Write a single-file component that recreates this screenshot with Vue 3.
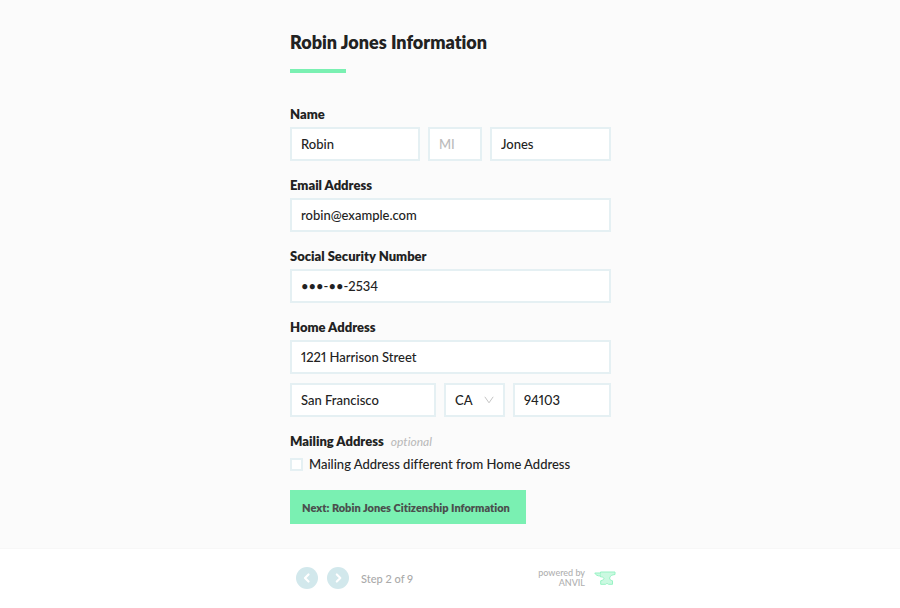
<script setup>
import { ref } from 'vue'

const first = ref('Robin')
const middle = ref('')
const last = ref('Jones')
const email = ref('robin@example.com')
const ssn = ref('•••-••-2534')
const street = ref('1221 Harrison Street')
const city = ref('San Francisco')
const state = ref('CA')
const zip = ref('94103')
const different = ref(false)
</script>

<template>
  <div class="page">
    <main class="content">
      <form class="form" @submit.prevent>
        <h1 class="title">Robin Jones Information</h1>
        <div class="field">
          <label class="label" for="first">Name</label>
          <div class="row name-row">
            <input id="first" v-model="first" class="input" type="text" />
            <input v-model="middle" class="input" type="text" placeholder="MI" aria-label="Middle initial" />
            <input v-model="last" class="input" type="text" aria-label="Last name" />
          </div>
        </div>
        <div class="field">
          <label class="label" for="email">Email Address</label>
          <input id="email" v-model="email" class="input" type="email" />
        </div>
        <div class="field">
          <label class="label" for="ssn">Social Security Number</label>
          <input id="ssn" v-model="ssn" class="input" type="text" />
        </div>
        <div class="field">
          <label class="label" for="street">Home Address</label>
          <input id="street" v-model="street" class="input" type="text" />
          <div class="row city-row">
            <input v-model="city" class="input" type="text" aria-label="City" />
            <div class="select-wrap">
              <select v-model="state" class="input select" aria-label="State">
                <option>CA</option>
              </select>
              <svg class="caret" viewBox="0 0 10 8" aria-hidden="true"><path d="M0.8 0.8 5 6.8 9.2 0.8" /></svg>
            </div>
            <input v-model="zip" class="input" type="text" aria-label="Zip code" />
          </div>
        </div>
        <div class="mailing">
          <div class="label">Mailing Address <em class="optional">optional</em></div>
          <label class="check">
            <input v-model="different" class="box" type="checkbox" />
            <span>Mailing Address different from Home Address</span>
          </label>
        </div>
        <button class="next" type="submit">Next: Robin Jones Citizenship Information</button>
      </form>
    </main>
    <footer class="footer">
      <div class="footer-inner">
        <button class="round" type="button" aria-label="Previous step">
          <svg viewBox="0 0 22 22"><path d="M12.5 7.500 9 11l3.500 3.500" /></svg>
        </button>
        <button class="round" type="button" aria-label="Next step">
          <svg viewBox="0 0 22 22"><path d="M9.800 7.500l3.500 3.500-3.500 3.500" /></svg>
        </button>
        <span class="step">Step 2 of 9</span>
        <a class="powered" href="#">
          <span class="powered-text"><span>powered by</span><span>ANVIL</span></span>
          <svg class="anvil" viewBox="0 0 22 14" aria-hidden="true">
            <path d="M6.500 1H21v2.500c-3 .2-5 1.500-5.400 3.500 0 1.500.9 2.300 2.900 2.800V13.300h-4.100c-.5-1-2.200-1-2.700 0H6.700V9.800c2.200-.5 3.300-1.300 3.300-2.600-.6-.9-1.700-1.400-3.500-1.400Z" />
            <path d="M6.500 2H.8c.8 2 2.700 3 5.700 3" />
          </svg>
        </a>
      </div>
    </footer>
  </div>
</template>

<style>
body {
  background: #fff;
}
</style>

<style scoped>
.page {
  font-family: Lato, "Open Sans", sans-serif;
  font-size: 13px;
  font-weight: 500;
  font-variant-ligatures: none;
  font-variant-numeric: proportional-nums;
  color: #222;
}
.content {
  padding: 30px 16px 24px 17px;
  background: #fbfbfb;
  border-bottom: 1px solid #f7f7f7;
}
.form {
  max-width: 321px;
  margin: 0 auto;
}
.title {
  margin: 0 0 31px;
  font-size: 18px;
  line-height: 24px;
  font-weight: 800;
}
.title::after {
  content: "";
  display: block;
  width: 56px;
  height: 4px;
  margin-top: 15px;
  background: #7af0b2;
}
.field {
  display: flex;
  flex-direction: column;
  margin-bottom: 14px;
}
.label {
  line-height: 20px;
  margin-bottom: 3px;
  font-weight: 800;
}
.row {
  display: grid;
  gap: 8px;
}
.name-row {
  grid-template-columns: 130fr 54fr 121fr;
}
.city-row {
  grid-template-columns: 146fr 61fr 98fr;
  margin-top: 9px;
}
.input {
  box-sizing: border-box;
  width: 100%;
  min-width: 0;
  height: 34px;
  margin: 0;
  padding: 0 9px;
  border: 2px solid #e5f0f3;
  border-radius: 0;
  background: #fff;
  color: #222;
  font: inherit;
  font-variant-ligatures: inherit;
  font-variant-numeric: inherit;
  outline: none;
}
.input::placeholder {
  color: #bbb;
  opacity: 1;
}
.select-wrap {
  position: relative;
}
.select {
  appearance: none;
}
.caret {
  position: absolute;
  right: 11px;
  top: 13px;
  width: 10px;
  height: 8px;
  fill: none;
  stroke: #c4c4c4;
  pointer-events: none;
}
.mailing .label {
  margin-bottom: 2px;
}
.optional {
  margin-left: 4px;
  font-size: 12px;
  font-weight: 500;
  color: #bbb;
}
.check {
  display: flex;
  align-items: center;
  gap: 6px;
  line-height: 20px;
}
.box {
  appearance: none;
  box-sizing: border-box;
  width: 13px;
  height: 13px;
  margin: 0;
  border: 2px solid #e5f0f3;
  background: #fff;
}
.box:checked {
  background: #7af0b2;
}
.next {
  display: block;
  height: 34px;
  margin-top: 16px;
  padding: 0 16px 0 12px;
  border: 0;
  background: #7af0b2;
  color: #4a4f4d;
  font: inherit;
  font-size: 11px;
  font-weight: 800;
  font-variant-ligatures: inherit;
}
.footer {
  padding: 18px 16px 18px 28px;
}
.footer-inner {
  display: flex;
  align-items: center;
  max-width: 320px;
  margin: 0 auto;
}
.round {
  width: 22px;
  height: 22px;
  margin-right: 9px;
  padding: 0;
  border: 0;
  border-radius: 50%;
  background: #d2e8ec;
}
.round svg {
  display: block;
  fill: none;
  stroke: #fff;
  stroke-width: 2.2;
  stroke-linecap: round;
  stroke-linejoin: round;
}
.step {
  margin-left: 3px;
  font-size: 11px;
  color: #aaa;
}
.powered {
  display: flex;
  align-items: center;
  gap: 9px;
  margin-left: auto;
  color: #b0b0b0;
  font-size: 9px;
  line-height: 10px;
  text-align: right;
  text-decoration: none;
}
.powered-text {
  display: flex;
  flex-direction: column;
}
.anvil {
  width: 22px;
  height: 14px;
  fill: #cbf9e1;
  stroke: #97f3c4;
}
</style>
